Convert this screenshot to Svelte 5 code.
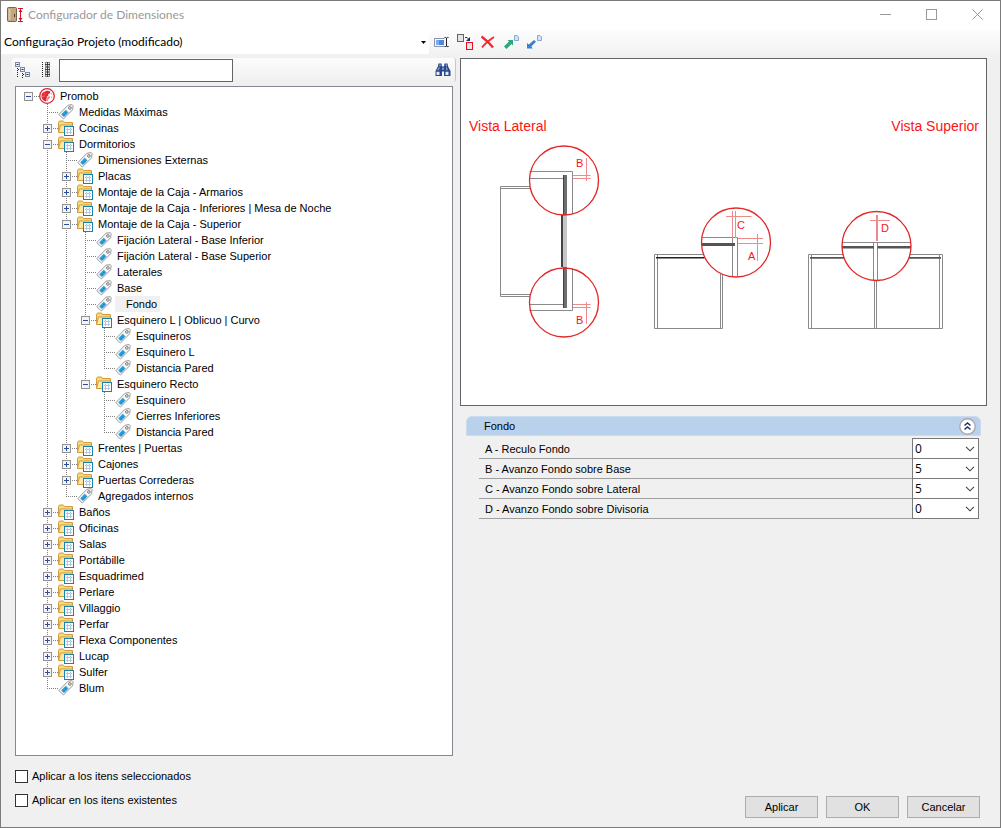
<script>
  let nextId = 0;
  const leaf = (label) => ({ id: nextId++, label, kind: 'tag' });
  const folder = (label, open = false, children = []) => ({
    id: nextId++,
    label,
    kind: 'folder',
    open,
    children
  });

  let root = $state({
    id: nextId++,
    label: 'Promob',
    kind: 'brand',
    open: true,
    children: [
      leaf('Medidas Máximas'),
      folder('Cocinas'),
      folder('Dormitorios', true, [
        leaf('Dimensiones Externas'),
        folder('Placas'),
        folder('Montaje de la Caja - Armarios'),
        folder('Montaje de la Caja - Inferiores | Mesa de Noche'),
        folder('Montaje de la Caja - Superior', true, [
          leaf('Fijación Lateral - Base Inferior'),
          leaf('Fijación Lateral - Base Superior'),
          leaf('Laterales'),
          leaf('Base'),
          leaf('Fondo'),
          folder('Esquinero L | Oblicuo | Curvo', true, [
            leaf('Esquineros'),
            leaf('Esquinero L'),
            leaf('Distancia Pared')
          ]),
          folder('Esquinero Recto', true, [
            leaf('Esquinero'),
            leaf('Cierres Inferiores'),
            leaf('Distancia Pared')
          ])
        ]),
        folder('Frentes | Puertas'),
        folder('Cajones'),
        folder('Puertas Correderas'),
        leaf('Agregados internos')
      ]),
      folder('Baños'),
      folder('Oficinas'),
      folder('Salas'),
      folder('Portábille'),
      folder('Esquadrimed'),
      folder('Perlare'),
      folder('Villaggio'),
      folder('Perfar'),
      folder('Flexa Componentes'),
      folder('Lucap'),
      folder('Sulfer'),
      leaf('Blum')
    ]
  });

  let selected = $state('Fondo');
  let groupOpen = $state(true);

  let params = $state([
    { id: 'a', label: 'A - Reculo Fondo', value: '0' },
    { id: 'b', label: 'B - Avanzo Fondo sobre Base', value: '5' },
    { id: 'c', label: 'C - Avanzo Fondo sobre Lateral', value: '5' },
    { id: 'd', label: 'D - Avanzo Fondo sobre Divisoria', value: '0' }
  ]);
</script>

{#snippet nodeIcon(kind)}
  {#if kind === 'brand'}
    <svg class="icon" viewBox="0 0 16 16" aria-hidden="true">
      <circle cx="8" cy="8" r="7.3" fill="#fff" stroke="#d9252f" stroke-width="1.3" />
      <path d="M8 8L7.200 13.500A5.600 5.600 0 0 1 3.500 4.700L8 2.400l3.500 1.200-1 2.200-1.500.4.500 1.600z" fill="#de2a36" />
      <path d="M8.600 8.600h2.600l-.8 2-1.200.6-.4 2-.8-.2zM12 4.600l1.200 2h-1.600zM12 8.500l1.300.3-.8 2z" fill="#ec7c83" />
      <path d="M3 8.500l3-.6M5.200 4.800l1.300 1.600" stroke="#f3a3a8" stroke-width=".6" fill="none" />
    </svg>
  {:else if kind === 'folder'}
    <svg class="icon" viewBox="0 0 16 16" aria-hidden="true">
      <path d="M.5 12.500V2.500l1-1.500h3.800l1.200 1.500h8v4" fill="#f9d977" stroke="#d39a3a" />
      <path d="M.5 12.500l2-7.500h12v7.500z" fill="#fce9a6" stroke="#d39a3a" />
      <rect x="6.500" y="6.500" width="9" height="9" fill="#fff" stroke="#1681b5" />
      <path d="M8 9.500h6M8 12.500h6M9.500 8v6M12.500 8v6" stroke="#b3cbe0" />
    </svg>
  {:else}
    <svg class="icon" viewBox="0 0 16 16" aria-hidden="true">
      <path d="M.8 10.600L10 1.200l4.200-.6.9 1-.5 4.200L5.400 15z" fill="#f6f6f6" stroke="#9a9a9a" />
      <path d="M3.200 10.400l4.600-4.600 2.700 2.700-4.600 4.600z" fill="#2b9fdc" />
      <path d="M5 9.600l2.200 2.200M6.600 8l2.200 2.200" stroke="#1677b0" stroke-width=".7" />
      <circle cx="11.900" cy="3.900" r="1.300" fill="#fff" stroke="#6f6f6f" />
    </svg>
  {/if}
{/snippet}

{#snippet treeNode(node)}
  <li class:top={node.kind === 'brand'} role="treeitem" aria-selected={selected === node.label}>
    <div class="node">
      {#if node.children}
        <button
          type="button"
          class="expander"
          aria-label={node.label}
          onclick={() => (node.open = !node.open)}
        >
          <svg viewBox="0 0 9 9" aria-hidden="true">
            <rect x=".5" y=".5" width="8" height="8" fill="#f4f4f4" stroke="#919191" />
            <path d={node.open ? 'M2 4.5h5' : 'M2 4.5h5M4.5 2v5'} stroke="#2b4c9b" />
          </svg>
        </button>
      {:else}
        <span class="spacer"></span>
      {/if}
      {@render nodeIcon(node.kind)}
      <button
        type="button"
        class="label"
        class:selected={selected === node.label}
        onclick={() => (selected = node.label)}>{node.label}</button
      >
    </div>
    {#if node.children && node.open && node.children.length}
      <ul role="group">
        {#each node.children as child (child.id)}
          {@render treeNode(child)}
        {/each}
      </ul>
    {/if}
  </li>
{/snippet}

<div class="window">
  <header class="titlebar">
    <svg class="icon" viewBox="0 0 16 16" aria-hidden="true">
      <rect x=".5" y=".5" width="9" height="14" rx="1" fill="#c3a680" stroke="#7c6247" />
      <path d="M2.500 2v11" stroke="#dcc7a6" stroke-width="2" />
      <path d="M7.500 7v3" stroke="#4b3a28" />
      <path d="M11 1.500h5M11 14.500h5M13.500 2v12" stroke="#d4142a" />
      <path d="M11.500 5l2-3 2 3zM11.500 11l2 3 2-3z" fill="#d4142a" />
    </svg>
    <h1>Configurador de Dimensiones</h1>
    <button type="button" class="win" aria-label="Minimizar">
      <svg viewBox="0 0 11 11"><path d="M0 5.500h11" stroke="#999" /></svg>
    </button>
    <button type="button" class="win" aria-label="Maximizar">
      <svg viewBox="0 0 11 11"><rect x=".5" y=".5" width="10" height="10" fill="none" stroke="#999" /></svg>
    </button>
    <button type="button" class="win" aria-label="Cerrar">
      <svg viewBox="0 0 11 11"><path d="M.5.5l10 10M10.500.5l-10 10" stroke="#999" /></svg>
    </button>
  </header>

  <div class="toolbar">
    <div class="project">
      <select aria-label="Configuración">
        <option>Configuração Projeto (modificado)</option>
      </select>
      <svg class="caret" viewBox="0 0 5 3" aria-hidden="true"><path d="M0 0h5L2.500 3z" /></svg>
    </div>
    <div class="tools">
      <button type="button" class="tool" aria-label="Renombrar">
        <svg class="icon" viewBox="0 0 16 16">
          <path d="M10.500 4.500H.5v8h10M13 12.500h1.500" fill="none" stroke="#8a93a8" />
          <rect x="2" y="6" width="8" height="5" fill="#4f86e0" />
          <path d="M2 6h3v5H2z" fill="#7fabf0" />
          <path d="M10.500 3.500h1.200l.8.7.8-.7h1.200M10.500 12.500h1.200l.8-.7.8.7h1.200M12.500 4v8.500" fill="none" stroke="#222" />
        </svg>
      </button>
      <button type="button" class="tool" aria-label="Duplicar">
        <svg class="icon" viewBox="0 0 16 16">
          <rect x=".5" y=".5" width="6" height="7" fill="#e4e4e4" stroke="#6b6060" />
          <rect x="9.500" y="8.500" width="6" height="7" fill="#e8e8e8" stroke="#e80f1a" />
          <path d="M8 3.500h2l2 2" fill="none" stroke="#1b2d78" />
          <path d="M13 3v4H9z" fill="#1b2d78" />
        </svg>
      </button>
      <button type="button" class="tool" aria-label="Eliminar">
        <svg class="icon" viewBox="0 0 16 16">
          <path d="M1.500 2.500c4 3 8 6.500 11.500 11" fill="none" stroke="#f0282d" stroke-width="2.200" />
          <path d="M14 3C9.500 6 5 9.500 2 13.500" fill="none" stroke="#f0282d" stroke-width="1.800" />
        </svg>
      </button>
      <button type="button" class="tool" aria-label="Exportar">
        <svg class="icon" viewBox="0 0 16 16">
          <path d="M1 12.500l5-5L4.500 6H10v5.500L8.500 10l-5 5z" fill="#2fa67f" />
          <path d="M11.500 1.500h2.500l1.500 1.500v3.500h-4z" fill="#d5e3f7" stroke="#86a7d8" />
        </svg>
      </button>
      <button type="button" class="tool" aria-label="Importar">
        <svg class="icon" viewBox="0 0 16 16">
          <path d="M10 7.800L5.300 12.500 6.800 14.500H1V9l1.800 1.500L8 6z" fill="#3f7fd0" />
          <path d="M11.500 1.500h2.500l1.500 1.500v3.500h-4z" fill="#d5e3f7" stroke="#86a7d8" />
        </svg>
      </button>
    </div>
  </div>

  <main>
    <section class="left">
      <div class="search">
        <button type="button" class="tool" aria-label="Expandir">
          <svg class="icon" viewBox="0 0 16 16">
            <g fill="#e9eef5" stroke="#7b8ca5">
              <rect x=".5" y=".5" width="4" height="4" />
              <rect x="5.500" y="5.500" width="4" height="4" />
              <rect x="10.500" y="10.500" width="4" height="4" />
            </g>
            <path d="M1.500 2.500h2M6.500 7.500h2M11.500 12.500h2" stroke="#2a3a5c" />
            <path d="M2.500 6v10M7.500 11v5M3 7.500h2M8 12.500h2" stroke="#222" stroke-dasharray="1 1" />
          </svg>
        </button>
        <button type="button" class="tool" aria-label="Contraer">
          <svg class="icon" viewBox="-2 0 16 16">
            <g fill="#e9eef5" stroke="#8a8a8a">
              <rect x="5.500" y=".5" width="4" height="4" />
              <rect x="5.500" y="5.500" width="4" height="4" />
              <rect x="5.500" y="10.500" width="4" height="4" />
            </g>
            <path d="M5 2.500h5M7.500 0v5M5 7.500h5M7.500 5v5M5 12.500h5M7.500 10v5" stroke="#333" stroke-width=".9" />
            <path d="M2.500 0v16" stroke="#222" stroke-dasharray="1 1" />
          </svg>
        </button>
        <input type="text" aria-label="Buscar" />
        <button type="button" class="tool find" aria-label="Buscar siguiente">
          <svg class="icon" viewBox="0 0 16 16">
            <path d="M3.500 1.500h3l.5 3h2l.5-3h3l.6 3 2.400 4.500v5H9V9.500H7V14H.5V9l2.400-4.500z" fill="#2a4787" />
            <path d="M4.400 2.500h1.300v1.800H4.200zM10.700 2.500H12v1.800h-1.300zM3.800 5.300L2.200 8.300h1.500l1.200-3zM11 5.300l.3 3h1.500l-1-3z" fill="#8fabe0" />
            <path d="M1.500 9.800h3v3.200h-3zM10.500 9.800h3v3.200h-3z" fill="#dfe9fa" />
            <path d="M7.200 5.800h1.600v2H7.200z" fill="#9fb8e6" />
          </svg>
        </button>
      </div>
      <div class="tree">
        <ul role="tree">
          {@render treeNode(root)}
        </ul>
      </div>
    </section>

    <section class="right">
      <div class="preview">
        <svg viewBox="461 59 525 346" role="img" aria-label="Vista">
          <g class="title">
            <text x="469" y="131">Vista Lateral</text>
            <text x="979" y="131" text-anchor="end">Vista Superior</text>
          </g>

          <!-- side view -->
          <g class="line">
            <path d="M530 186.500H500.500V296.500H530M500.500 188.500H530M500.500 294.500H530" />
            <path d="M529.500 171.500H572.500V214M529.500 178.500H563" />
            <path d="M529.500 310.500H572.500V268M529.500 304.500H563" />
          </g>
          <path d="M563 215h4v52h-4z" fill="#c6c6c6" />
          <path d="M561 215h2v52h-2z" fill="#444" />
          <path d="M563 175h4v40h-4zM563 267h4v41h-4z" fill="#6e6e6e" />
          <path d="M563.500 175v40M563.500 267v41" stroke="#444" />
          <g class="dim">
            <path d="M586.500 158V181M573 175.500H590.500M573 178.500H590.500" />
            <path d="M586.500 302V324M573 304.500H590.500M573 307.500H590.500" />
          </g>
          <circle cx="564" cy="180.500" r="34.500" />
          <circle cx="564" cy="302.500" r="34.500" />

          <!-- top view, single body -->
          <g class="line">
            <path d="M704 254.500H654.500V328.500H722.500V274M657.500 255V328.500M720.500 274V328.500" />
            <path d="M702 237.500H737.500V276M732.500 238V276" />
          </g>
          <path d="M656 257h48.500v1.500H656z" fill="#222" />
          <path d="M702 243h33v3h-33z" fill="#555" />
          <g class="dim">
            <path d="M732.500 211V238M735.500 211V238M726 216.500H751.500" />
            <path d="M738 238.500H763M738 243.500H763M757.500 234V261" />
          </g>
          <circle cx="736" cy="242.500" r="34.500" />

          <!-- top view, divided body -->
          <g class="line">
            <path d="M843 254.500H808.500V328.500H942.500V254.500H910M811.500 255V328.500M939.500 255V328.500M874.500 281V328.500M876.500 281V328.500" />
            <path d="M842 242.500H911M873.500 242.500V281M877.500 242.500V281" />
          </g>
          <path d="M810 257h34v1.800h-34zM909 257h32v1.800h-32z" fill="#555" />
          <path d="M842 246h32v2.600h-32zM877.500 246H911v2.600h-33.500z" fill="#555" />
          <g class="dim">
            <path d="M876.500 215V241M877.500 215V241M870 220.500H890" />
          </g>
          <circle cx="876.500" cy="246" r="34.500" />

          <g class="mark">
            <text x="576" y="167">B</text>
            <text x="576" y="324">B</text>
            <text x="737" y="229">C</text>
            <text x="748" y="260">A</text>
            <text x="881" y="232">D</text>
          </g>
        </svg>
      </div>

      <div class="group">
        <div class="group-head">
          <h2>Fondo</h2>
          <button type="button" class="fold" aria-label="Fondo" onclick={() => (groupOpen = !groupOpen)}>
            <svg viewBox="0 0 17 17">
              <circle cx="8.500" cy="8.500" r="7.700" fill="#fff" stroke="#a9a9b3" stroke-width="1.400" />
              <path d="M5.500 7.500l3-2.500 3 2.500M5.500 11.500l3-2.500 3 2.500" fill="none" stroke="#20316f" stroke-width="1.500" />
            </svg>
          </button>
        </div>
        {#if groupOpen}
          <div class="params">
            {#each params as param (param.id)}
              <div class="param">
                <label for={`param-${param.id}`}>{param.label}</label>
                <div class="value">
                  <select id={`param-${param.id}`} bind:value={param.value}>
                    <option>0</option>
                    <option>5</option>
                  </select>
                  <svg viewBox="0 0 10 6" aria-hidden="true"><path d="M1 .8l4 4 4-4" fill="none" stroke="#444" stroke-width="1.100" /></svg>
                </div>
              </div>
            {/each}
          </div>
        {/if}
      </div>
    </section>
  </main>

  <footer>
    <div class="checks">
      <label><input type="checkbox" />Aplicar a los itens seleccionados</label>
      <label><input type="checkbox" />Aplicar en los itens existentes</label>
    </div>
    <div class="actions">
      <button type="button">Aplicar</button>
      <button type="button">OK</button>
      <button type="button">Cancelar</button>
    </div>
  </footer>
</div>

<style>
  :global(body) {
    margin: 0;
  }
  .window,
  .window * {
    box-sizing: border-box;
  }
  .window {
    --caption: Lato, 'Open Sans', sans-serif;
    min-height: 100vh;
    display: flex;
    flex-direction: column;
    border: 1px solid #7b7b7b;
    background: #f0f0f0;
    color: #000;
    font: 11px/16px 'Liberation Sans', Arial, sans-serif;
  }
  button,
  select,
  input {
    font: inherit;
    color: inherit;
    margin: 0;
    padding: 0;
    border: 0;
    border-radius: 0;
    background: none;
  }
  select {
    appearance: none;
  }
  h1,
  h2 {
    margin: 0;
    font: inherit;
  }
  ul {
    list-style: none;
    margin: 0;
    padding: 0;
  }
  svg {
    display: block;
  }
  .icon {
    width: 16px;
    height: 16px;
    flex: none;
  }

  .titlebar {
    display: flex;
    align-items: center;
    height: 29px;
    padding: 0 0 2px 6px;
    background: #fff;
  }
  .titlebar h1 {
    flex: 1;
    margin-left: 5px;
    font: 12px/16px var(--caption);
    color: #999;
  }
  .win {
    width: 46px;
    height: 27px;
    display: grid;
    place-items: center;
  }
  .win svg {
    width: 11px;
    height: 11px;
  }

  .toolbar {
    display: grid;
    grid-template-columns: 3fr 4fr;
    height: 28px;
    background: linear-gradient(#fdfdfd, #f0f0f0);
  }
  .project {
    display: grid;
    align-items: center;
    height: 24px;
    background: #fff;
  }
  .project select {
    grid-area: 1 / 1;
    width: 100%;
    height: 24px;
    padding-left: 3px;
    font: 12px/16px var(--caption);
  }
  .caret {
    grid-area: 1 / 1;
    justify-self: end;
    width: 5px;
    height: 3px;
    margin-right: 3px;
    pointer-events: none;
  }
  .tools {
    display: flex;
    gap: 7px;
    height: 24px;
    align-items: center;
    padding-left: 5px;
  }

  main {
    flex: 1;
    display: grid;
    grid-template-columns: 438fr 527fr;
    gap: 7px;
    padding: 0 13px 0 14px;
  }
  .left {
    display: flex;
    flex-direction: column;
    gap: 4px;
    min-width: 0;
  }
  .search {
    display: flex;
    align-items: center;
    height: 24px;
    margin: 0 -3px;
    padding: 0 4px 0 3px;
    border-right: 1px solid #c8c8c8;
    border-radius: 3px;
    background: linear-gradient(#fcfcfc, #f0f0f0);
  }
  .search .tool {
    margin-right: 7px;
  }
  .search input {
    width: 174px;
    height: 23px;
    margin-right: auto;
    margin-left: -2px;
    padding: 0 4px;
    border: 1px solid #646464;
    background: #fff;
  }
  .search .find {
    margin-right: 0;
  }

  .tree {
    flex: 1;
    padding: 1px 0;
    border: 1px solid #828790;
    background: #fff;
    overflow: auto;
  }
  li {
    background: repeating-linear-gradient(#808080 0 1px, transparent 1px 2px) 12px 0 / 1px 100% no-repeat;
  }
  li:last-child {
    background-size: 1px 8px;
  }
  li.top {
    background: none;
  }
  li ul {
    margin-left: 19px;
  }
  .node {
    display: flex;
    align-items: center;
    height: 16px;
    padding-left: 8px;
    background: repeating-linear-gradient(90deg, #808080 0 1px, transparent 1px 2px) 12px 8px / 11px 1px no-repeat;
  }
  .expander,
  .spacer {
    flex: none;
    width: 9px;
    margin-right: 6px;
  }
  .expander svg {
    width: 9px;
    height: 9px;
  }
  .label {
    height: 16px;
    margin-left: 3px;
    padding: 0 2px;
    white-space: nowrap;
  }
  .label.selected {
    padding: 0 3px 0 11px;
    background: #f0f0f0;
  }

  .right {
    min-width: 0;
  }
  .preview {
    border: 1px solid #646464;
    background: #fff;
  }
  .preview svg {
    width: 100%;
  }
  .preview text {
    fill: #fb1414;
    font-family: 'Liberation Sans', Arial, sans-serif;
  }
  .title text {
    font-size: 14px;
  }
  .mark text {
    font-size: 11px;
  }
  .line path {
    fill: none;
    stroke: #8a8a8a;
  }
  .dim path {
    fill: none;
    stroke: #ef8a8a;
  }
  .preview circle {
    fill: none;
    stroke: #e32626;
    stroke-width: 1.3px;
  }

  .group {
    margin: 10px 6px 0;
  }
  .group-head {
    display: flex;
    align-items: center;
    justify-content: space-between;
    height: 20px;
    padding: 0 4px 0 17px;
    border: 1px solid #c9dcf0;
    border-radius: 6px 6px 0 0;
    background: #b9d1ea;
  }
  .fold svg {
    width: 17px;
    height: 17px;
  }
  .params {
    margin: 3px 2px 0 13px;
  }
  .param {
    display: flex;
    align-items: center;
    height: 20px;
    border-bottom: 1px solid #a0a0a0;
  }
  .param label {
    flex: 1;
    padding-left: 6px;
  }
  .value {
    display: grid;
    align-items: center;
    width: 67px;
    height: 21px;
    border: 1px solid #7a7a7a;
    background: #fff;
  }
  .value select {
    grid-area: 1 / 1;
    width: 100%;
    height: 19px;
    padding-left: 2px;
    font: 12px/16px 'Open Sans', 'Noto Sans', sans-serif;
  }
  .value svg {
    grid-area: 1 / 1;
    justify-self: end;
    width: 10px;
    height: 6px;
    margin-right: 3px;
    pointer-events: none;
  }

  footer {
    display: flex;
    justify-content: space-between;
    align-items: flex-end;
    padding: 12px 20px 9px 14px;
  }
  .checks {
    display: grid;
    gap: 8px;
    margin-bottom: 10px;
  }
  .checks label {
    display: flex;
    align-items: center;
    gap: 4px;
  }
  .checks input {
    appearance: none;
    width: 13px;
    height: 13px;
    border: 1px solid #333;
    background: #fff;
  }
  .checks input:checked {
    background: #333;
    box-shadow: inset 0 0 0 2px #fff;
  }
  .actions {
    display: flex;
    gap: 8px;
  }
  .actions button {
    width: 73px;
    height: 22px;
    border: 1px solid #adadad;
    background: #e1e1e1;
  }
</style>
